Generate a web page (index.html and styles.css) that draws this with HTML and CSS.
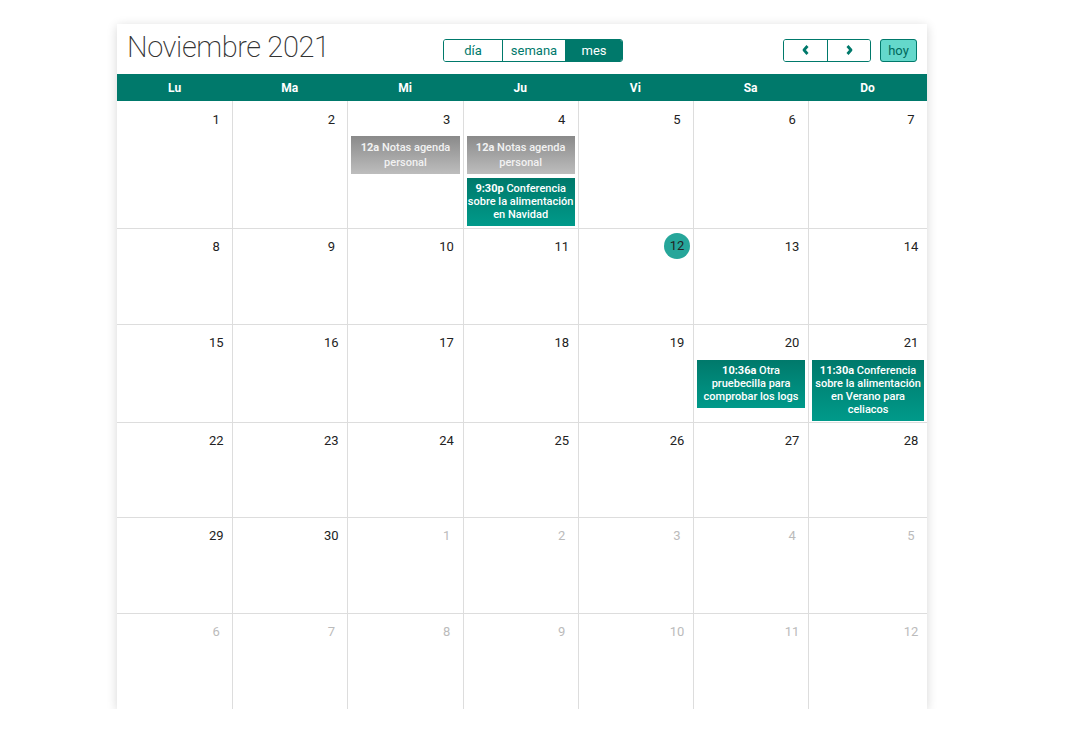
FILE: index.html
```html
<!DOCTYPE html>
<html lang="es">
<head>
<meta charset="utf-8">
<title>Calendario</title>
<link rel="stylesheet" href="styles.css">
</head>
<body>
<div class="card">
  <div class="toolbar">
    <h1 class="title">Noviembre 2021</h1>
    <div class="seg">
      <button class="seg-btn w-dia">día</button>
      <button class="seg-btn w-semana">semana</button>
      <button class="seg-btn w-mes active">mes</button>
    </div>
    <div class="spacer"></div>
    <div class="seg nav">
      <button class="seg-btn w-nav"><svg width="7" height="10" viewBox="0 0 7 10"><path d="M5.5 1 L2 5 L5.5 9" fill="none" stroke="#00796b" stroke-width="2.8" stroke-linejoin="round"/></svg></button>
      <button class="seg-btn w-nav"><svg width="7" height="10" viewBox="0 0 7 10"><path d="M1.5 1 L5 5 L1.5 9" fill="none" stroke="#00796b" stroke-width="2.8" stroke-linejoin="round"/></svg></button>
    </div>
    <button class="hoy">hoy</button>
  </div>
  <div class="dow">
    <div>Lu</div><div>Ma</div><div>Mi</div><div>Ju</div><div>Vi</div><div>Sa</div><div>Do</div>
  </div>
  <div class="month">
    <div class="cell"><span class="num">1</span></div>
    <div class="cell"><span class="num">2</span></div>
    <div class="cell"><span class="num">3</span>
      <div class="ev gray"><b>12a</b> Notas agenda personal</div>
    </div>
    <div class="cell"><span class="num">4</span>
      <div class="ev gray"><b>12a</b> Notas agenda personal</div>
      <div class="ev teal"><b>9:30p</b> Conferencia sobre la alimentación en Navidad</div>
    </div>
    <div class="cell"><span class="num">5</span></div>
    <div class="cell"><span class="num">6</span></div>
    <div class="cell"><span class="num">7</span></div>

    <div class="cell"><span class="num">8</span></div>
    <div class="cell"><span class="num">9</span></div>
    <div class="cell"><span class="num">10</span></div>
    <div class="cell"><span class="num">11</span></div>
    <div class="cell"><span class="num today">12</span></div>
    <div class="cell"><span class="num">13</span></div>
    <div class="cell"><span class="num">14</span></div>

    <div class="cell"><span class="num">15</span></div>
    <div class="cell"><span class="num">16</span></div>
    <div class="cell"><span class="num">17</span></div>
    <div class="cell"><span class="num">18</span></div>
    <div class="cell"><span class="num">19</span></div>
    <div class="cell"><span class="num">20</span>
      <div class="ev teal"><b>10:36a</b> Otra pruebecilla para comprobar los logs</div>
    </div>
    <div class="cell"><span class="num">21</span>
      <div class="ev teal"><b>11:30a</b> Conferencia sobre la alimentación en Verano para celiacos</div>
    </div>

    <div class="cell"><span class="num">22</span></div>
    <div class="cell"><span class="num">23</span></div>
    <div class="cell"><span class="num">24</span></div>
    <div class="cell"><span class="num">25</span></div>
    <div class="cell"><span class="num">26</span></div>
    <div class="cell"><span class="num">27</span></div>
    <div class="cell"><span class="num">28</span></div>

    <div class="cell"><span class="num">29</span></div>
    <div class="cell"><span class="num">30</span></div>
    <div class="cell other"><span class="num">1</span></div>
    <div class="cell other"><span class="num">2</span></div>
    <div class="cell other"><span class="num">3</span></div>
    <div class="cell other"><span class="num">4</span></div>
    <div class="cell other"><span class="num">5</span></div>

    <div class="cell other"><span class="num">6</span></div>
    <div class="cell other"><span class="num">7</span></div>
    <div class="cell other"><span class="num">8</span></div>
    <div class="cell other"><span class="num">9</span></div>
    <div class="cell other"><span class="num">10</span></div>
    <div class="cell other"><span class="num">11</span></div>
    <div class="cell other"><span class="num">12</span></div>
  </div>
</div>
</body>
</html>
```
FILE: styles.css
```css
html, body {
  margin: 0;
  padding: 0;
  background: #ffffff;
  font-family: Roboto, "Liberation Sans", sans-serif;
}

.card {
  width: 810px;
  margin: 24px 0 0 117px;
  background: #fff;
  box-shadow: 0 2px 10px rgba(0, 0, 0, 0.16);
}

.toolbar {
  height: 50px;
  display: flex;
  align-items: center;
  padding: 0 10px;
  box-sizing: border-box;
}

.title {
  margin: 0;
  width: 316px;
  flex: 0 0 auto;
  font-size: 29px;
  font-weight: 200;
  letter-spacing: -0.4px;
  color: #333;
  line-height: 1;
  margin-top: -4px;
}

.seg {
  display: flex;
  height: 23px;
  border: 1px solid #00796b;
  border-radius: 3px;
  box-sizing: border-box;
  overflow: hidden;
  margin-top: 2px;
}

.seg-btn {
  border: none;
  border-left: 1px solid #00796b;
  background: #fff;
  color: #00796b;
  font-family: Roboto, "Liberation Sans", sans-serif;
  font-size: 13px;
  padding: 0;
  margin: 0;
  height: 100%;
  display: flex;
  align-items: center;
  justify-content: center;
}

.seg-btn:first-child { border-left: none; }

.w-dia { width: 58px; }
.w-semana { width: 63px; }
.w-mes { width: 57px; }
.w-nav { width: 43px; }

.seg-btn.active {
  background: #00796b;
  color: #fff;
}

.spacer { flex: 1; }

.hoy {
  margin-left: 9px;
  margin-top: 2px;
  height: 23px;
  width: 37px;
  padding: 0;
  border: 1px solid #00796b;
  border-radius: 3px;
  background: #64d8cb;
  color: #00695c;
  font-family: Roboto, "Liberation Sans", sans-serif;
  font-size: 13px;
}

.dow {
  display: grid;
  grid-template-columns: repeat(6, 115.2px) 1fr;
  height: 27px;
  background: #00796b;
  color: #fff;
  font-size: 12px;
  font-weight: 700;
}

.dow div {
  display: flex;
  align-items: center;
  justify-content: center;
}

.month {
  display: grid;
  grid-template-columns: repeat(6, 115.2px) 1fr;
  grid-template-rows: 128px 96px 98px 95px 96px 95px;
}

.cell {
  border-left: 1px solid #dddddd;
  border-bottom: 1px solid #dddddd;
  box-sizing: border-box;
  display: flex;
  flex-direction: column;
  align-items: stretch;
  padding: 5px 3px 3px 3px;
}

.cell:nth-child(-n+7) { padding-top: 6px; }
.cell:nth-child(7n+1) { border-left: none; }
.cell:nth-last-child(-n+7) { border-bottom: none; }

.num {
  align-self: flex-end;
  width: 26px;
  height: 26px;
  line-height: 26px;
  text-align: center;
  font-size: 13px;
  color: #222;
  margin-bottom: 3px;
}

.cell:nth-child(n+8) .num { margin-bottom: 4px; }

.num.today {
  background: #26a69a;
  border-radius: 50%;
  margin-top: -1px;
}

.other .num { color: #bbb; }

.ev {
  margin: 0 0 4px 0;
  font-size: 11px;
  font-weight: 500;
  color: #fff;
  text-align: center;
  line-height: 13px;
  padding: 4px 0 5px;
}

.ev b { font-weight: 700; }

.ev.gray {
  background: linear-gradient(#8a8a8a, #bdbdbd);
  color: #f2f2f2;
  line-height: 15px;
  padding: 4px 0 4px;
}

.ev.teal {
  background: linear-gradient(#00796b, #009a8a);
}
```
